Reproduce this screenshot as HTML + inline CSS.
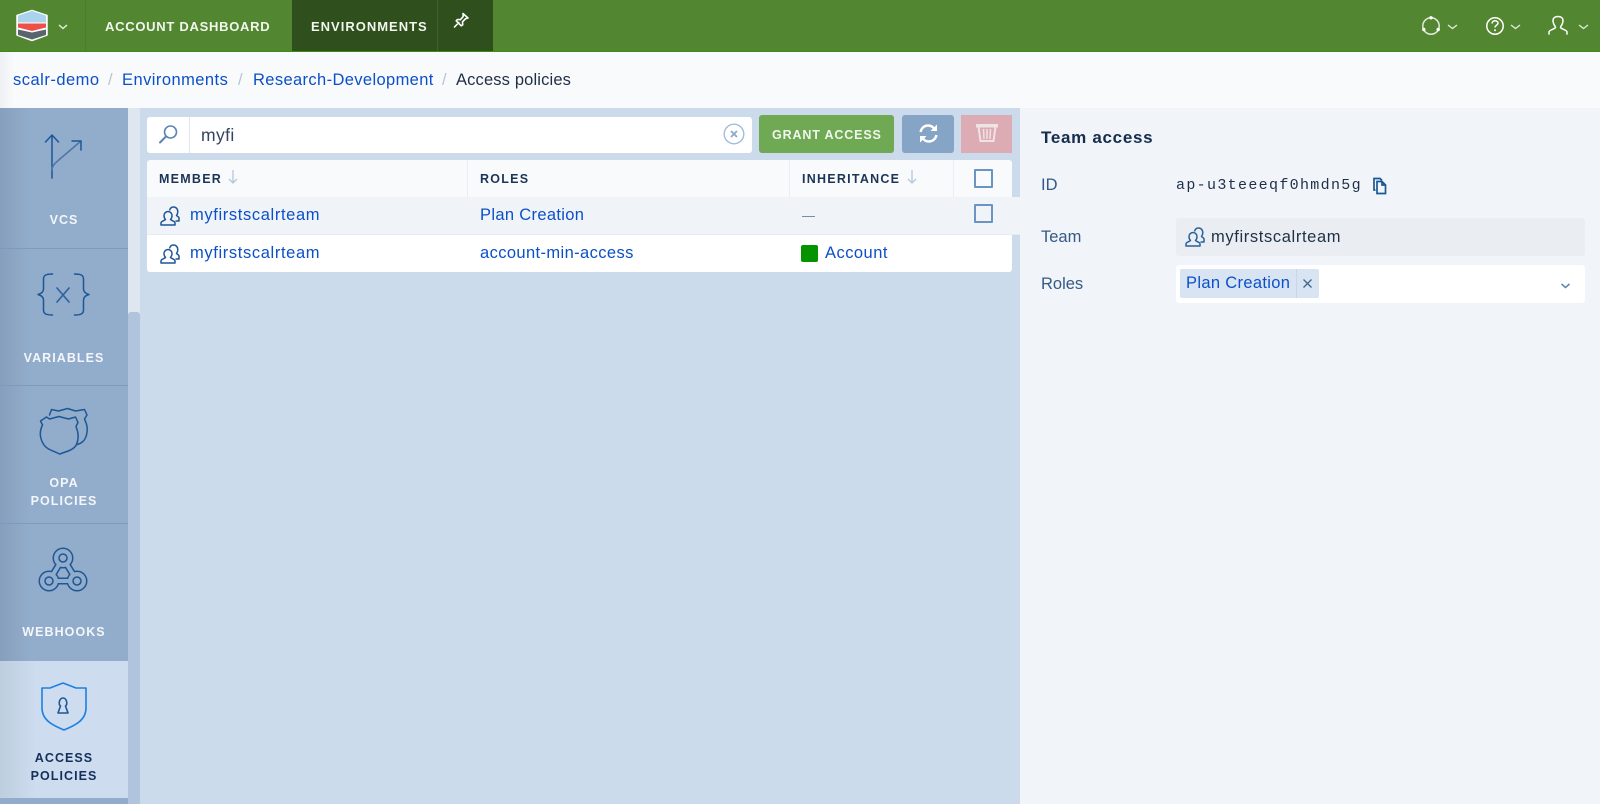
<!DOCTYPE html>
<html lang="en"><head><meta charset="utf-8"><title>Access policies</title>
<style>
*{box-sizing:border-box}
html,body{margin:0;padding:0}
body{width:1600px;height:804px;overflow:hidden;position:relative;background:#cbdbeb;font-family:"Liberation Sans",sans-serif;font-size:16.5px;color:#1d3557}
.a{position:absolute}
.t{position:absolute;white-space:nowrap;line-height:20px}
.l{color:#0b50c8}
.nav{color:#f2f6ee;font-weight:bold;font-size:13px;top:17px}
.side{position:absolute;left:0;width:128px;background:linear-gradient(90deg,#869fbc 0,#92accb 30px,#92accb 100%);border-bottom:1px solid #7f9bbc}
.sl{position:absolute;left:0;width:128px;text-align:center;color:#f3f6fa;font-weight:bold;font-size:12.5px;letter-spacing:1.05px;line-height:18px}
.th{font-weight:bold;font-size:12.5px;letter-spacing:1.25px;color:#1c3556;top:169px}
.cb{position:absolute;width:19px;height:19px;border:2px solid #6a94c2;border-radius:1px}
svg{position:absolute;overflow:visible}
.ic{fill:none;stroke:#1d5796;stroke-width:1.5;stroke-linecap:round;stroke-linejoin:round}
</style></head><body>

<!-- top bar -->
<div class="a" style="left:0;top:0;width:1600px;height:52px;background:#538630;border-bottom:1px solid #3f8a10"></div>
<div class="a" style="left:85px;top:0;width:1px;height:51px;background:#4c7c2b"></div>
<div class="a" style="left:292px;top:0;width:201px;height:51px;background:#2f4f1c"></div>
<div class="a" style="left:437px;top:0;width:1px;height:51px;background:#41622c"></div>
<div class="t nav" style="left:105px;letter-spacing:.72px">ACCOUNT DASHBOARD</div>
<div class="t nav" style="left:311px;letter-spacing:1px">ENVIRONMENTS</div>

<svg style="left:0;top:0" width="80" height="52" viewBox="0 0 80 52">
<path d="M17 15.500L32 10.500L47 15.500V35L32 40.500L17 35Z" fill="#fff" stroke="#fff" stroke-width="1.500" stroke-linejoin="round"/>
<path d="M18 15.500L32 11L46 15.500V22.500H18Z" fill="#abd3ee"/>
<path d="M18 23.500H46V27.500L32 31L18 27.500Z" fill="#ee4f47"/>
<path d="M18 29.500L32 32.500L46 29.500V35L32 39.500L18 35Z" fill="#56666c"/>
<path d="M59 25l4 3.500 4-3.500" fill="none" stroke="#d8e5cf" stroke-width="1.500"/>
</svg>
<svg style="left:452px;top:12px" width="18" height="18" viewBox="0 0 18 18"><path d="M11 1.500l5 4.500-2.500.8-3 3 .2 3-1.500 1-5-5 1.200-1.300 3 .2 2.800-3.200zM6.800 10.500l-4.300 4.500" fill="none" stroke="#fff" stroke-width="1.600" stroke-linejoin="round" stroke-linecap="round"/></svg>

<svg style="left:1420px;top:12px" width="180" height="28" viewBox="0 0 180 28">
<circle cx="11" cy="14" r="8.200" fill="none" stroke="#dfe9d8" stroke-width="1.500"/><circle cx="11" cy="5.800" r="1.700" fill="#fff"/><circle cx="3.800" cy="17.500" r="1.700" fill="#fff"/><circle cx="18.200" cy="17.500" r="1.700" fill="#fff"/>
<path d="M28 13l4.500 3.500 4.500-3.500M91 13l4.500 3.500 4.500-3.500M159 13l4.500 3.500 4.500-3.500" fill="none" stroke="#dfe9d8" stroke-width="1.400"/>
<circle cx="75" cy="14" r="8.200" fill="none" stroke="#fff" stroke-width="1.500"/>
<path d="M72 11.500c.3-2 1.500-2.800 3-2.800 1.800 0 3 1.100 3 2.500 0 2-3 2.100-3 4.300" fill="none" stroke="#fff" stroke-width="1.500"/><circle cx="75" cy="18.300" r="1" fill="#fff"/>
<path d="M129 22v-2c0-2 6-3 6.500-4.500.2-1-2.500-3-2.500-7 0-2.500 2-4 5-4s5 1.500 5 4c0 4-2.700 6-2.500 7 .5 1.500 6.500 2.500 6.500 4.500v2" fill="none" stroke="#fff" stroke-width="1.500" stroke-linecap="round" stroke-linejoin="round"/>
</svg>

<!-- breadcrumb -->
<div class="a" style="left:0;top:52px;width:1600px;height:56px;background:linear-gradient(90deg,#eef0f3 0,#f9fafc 14px)"></div>
<div class="t l" style="left:13px;top:70px;letter-spacing:.5px">scalr-demo</div>
<div class="t" style="left:108px;top:70px;color:#b8c4d2">/</div>
<div class="t l" style="left:122px;top:70px;letter-spacing:.45px">Environments</div>
<div class="t" style="left:238px;top:70px;color:#b8c4d2">/</div>
<div class="t l" style="left:253px;top:70px;letter-spacing:.37px">Research-Development</div>
<div class="t" style="left:442px;top:70px;color:#b8c4d2">/</div>
<div class="t" style="left:456px;top:70px;color:#1f2f45;letter-spacing:.15px">Access policies</div>

<!-- left column -->
<div class="a" style="left:0;top:108px;width:128px;height:696px;background:#92accb"></div>
<div class="a" style="left:128px;top:108px;width:12px;height:696px;background:#dee6f0"></div>
<div class="a" style="left:128px;top:312px;width:12px;height:492px;background:#b0c5dd;border-radius:3px 3px 0 0"></div>
<div class="a" style="left:140px;top:108px;width:880px;height:696px;background:#cbdbeb"></div>

<div class="side" style="top:108px;height:141px"></div>
<div class="side" style="top:249px;height:137px"></div>
<div class="side" style="top:386px;height:138px"></div>
<div class="side" style="top:524px;height:138px"></div>
<div class="a" style="left:0;top:798px;width:128px;height:6px;background:#92accb"></div>
<div class="a" style="left:0;top:661px;width:128px;height:137px;background:linear-gradient(90deg,#bdcedf 0,#cddcee 36px)"></div>

<div class="sl" style="top:211px">VCS</div>
<div class="sl" style="top:349px">VARIABLES</div>
<div class="sl" style="top:474px">OPA<br>POLICIES</div>
<div class="sl" style="top:623px">WEBHOOKS</div>
<div class="sl" style="top:749px;color:#14305a">ACCESS<br>POLICIES</div>

<svg style="left:0;top:108px" width="128" height="696" viewBox="0 0 128 696">
<g class="ic">
<path d="M52 70V27M45.500 34L52 27L58.500 34"/>
<path d="M52 62c0-3 2-6 5-8.500L81 33" stroke="#4d76a6"/>
<path d="M72 33H81V42"/>
<!-- braces -->
<path d="M52.500 166c-6 0-9 1-9 5v10c0 3-2 4.500-5.500 5.500 3.500 1 5.500 2.500 5.500 5.500v10c0 4 3 5 9 5M74.500 166c6 0 9 1 9 5v10c0 3 2 4.500 5.500 5.500-3.500 1-5.500 2.500-5.500 5.500v10c0 4-3 5-9 5"/>
<path d="M57 180l12 14M69 180l-12 14" stroke="#2f64a0" stroke-width="1.700"/>
<!-- shields -->
<path d="M49.500 307l2-5.500 7 1.500 9-2.500 8 2.500 9-1.500 2.500 5.500-2.500 4c2.500 5 3.500 11 2 16-1.500 6-5 8-9 9.500"/>
<path d="M59.500 346c-5-3-12-4-15.500-9-4-6-5-13-1.500-20l-2-4 6-4 3 2 9.500-2.500 9.500 2.500 7-2 2.500 5.500-2 4c2.500 6 3 12 .5 18-3 6-11 7-16.500 9.500z"/>
</g>
<!-- webhook as tube outline -->
<g fill="#1d5796" stroke="#1d5796">
<path d="M63 450L49 473H77Z" fill="none" stroke-width="7" stroke-linejoin="round"/>
<circle cx="63" cy="450" r="10.500" stroke="none"/><circle cx="49" cy="473" r="10.500" stroke="none"/><circle cx="77" cy="473" r="10.500" stroke="none"/>
</g>
<g fill="#92accb" stroke="#92accb">
<path d="M63 450L49 473H77Z" fill="none" stroke-width="4" stroke-linejoin="round"/>
<circle cx="63" cy="450" r="9" stroke="none"/><circle cx="49" cy="473" r="9" stroke="none"/><circle cx="77" cy="473" r="9" stroke="none"/>
</g>
<g fill="none" stroke="#1d5796" stroke-width="1.500">
<circle cx="63" cy="450" r="4"/><circle cx="49" cy="473" r="4"/><circle cx="77" cy="473" r="4"/>
</g>
<g fill="none" stroke="#1f80e0" stroke-width="1.600" stroke-linejoin="round">
<path d="M42 580h8l13-5 13 5h10v20c0 12-10 17-22 22-12-5-22-10-22-22z"/>
<path d="M60.500 598c-2.500-2-1-8 2.500-8s5 6 2.500 8l2.500 7h-10z" stroke="#1d5796"/>
</g>
</svg>

<!-- search -->
<div class="a" style="left:147px;top:117px;width:605px;height:36px;background:#fff;border-radius:3px"></div>
<div class="a" style="left:189px;top:117px;width:1px;height:36px;background:#dfe8f2"></div>
<svg style="left:158px;top:124px" width="22" height="22" viewBox="0 0 22 22"><circle cx="12.500" cy="8" r="6" fill="none" stroke="#5b83b4" stroke-width="1.600"/><path d="M8 12.500l-6 6" stroke="#5b83b4" stroke-width="2" stroke-linecap="round"/></svg>
<div class="t" style="left:201px;top:125px;font-size:17.5px;color:#33445e;letter-spacing:.4px">myfi</div>
<svg style="left:723px;top:123px" width="22" height="22" viewBox="0 0 22 22"><circle cx="11" cy="11" r="9.800" fill="none" stroke="#a3bcd9" stroke-width="1.400"/><path d="M8 8l6 6M14 8l-6 6" stroke="#8ea9c9" stroke-width="1.800"/></svg>

<!-- buttons -->
<div class="a" style="left:759px;top:115px;width:135px;height:38px;background:#6fa954;border-radius:3px"></div>
<div class="t" style="left:772px;top:125px;color:#f1f6ed;font-weight:bold;font-size:12.5px;letter-spacing:.85px">GRANT ACCESS</div>
<div class="a" style="left:902px;top:115px;width:52px;height:38px;background:#86a4c6;border-radius:3px"></div>
<svg style="left:918px;top:123px" width="21" height="21" viewBox="0 0 21 21"><path d="M2.500 9c.8-4 4-6.500 7.500-6.500 2.700 0 4.800 1.200 6 3M18.500 12c-.8 4-4 6.500-7.500 6.500-2.700 0-4.800-1.200-6-3" fill="none" stroke="#fff" stroke-width="2.400"/><path d="M19 1.500v6.500h-6.500zM2 19.500v-6.500h6.500z" fill="#fff"/></svg>
<div class="a" style="left:961px;top:115px;width:51px;height:38px;background:#dcabb3"></div>
<svg style="left:976px;top:122px" width="22" height="22" viewBox="0 0 22 22"><path d="M0 2h22v3.500h-22z" fill="#efe3e6"/><path d="M2.500 5l2 14h13l2-14" fill="none" stroke="#efe3e6" stroke-width="2"/><path d="M7.500 7l.5 10M11 7v10M14.500 7l-.5 10" stroke="#efe3e6" stroke-width="1.500"/></svg>

<!-- table -->
<div class="a" style="left:147px;top:160px;width:865px;height:37px;background:#f8fafc;border-radius:3px 3px 0 0"></div>
<div class="a" style="left:467px;top:160px;width:1px;height:37px;background:#e8eef5"></div>
<div class="a" style="left:789px;top:160px;width:1px;height:37px;background:#e8eef5"></div>
<div class="a" style="left:953px;top:160px;width:1px;height:37px;background:#e8eef5"></div>
<div class="a" style="left:147px;top:197px;width:873px;height:38px;background:#f0f4f9;border-bottom:1px solid #e3ebf3"></div>
<div class="a" style="left:147px;top:235px;width:865px;height:37px;background:#fff;border-radius:0 0 3px 3px"></div>

<div class="t th" style="left:159px">MEMBER</div>
<div class="t th" style="left:480px">ROLES</div>
<div class="t th" style="left:802px">INHERITANCE</div>
<svg style="left:227px;top:169px" width="12" height="16" viewBox="0 0 12 16"><path d="M6 1v13M2 10l4 4 4-4" fill="none" stroke="#b3c6dc" stroke-width="1.300"/></svg>
<svg style="left:906px;top:169px" width="12" height="16" viewBox="0 0 12 16"><path d="M6 1v13M2 10l4 4 4-4" fill="none" stroke="#b3c6dc" stroke-width="1.300"/></svg>
<div class="cb" style="left:974px;top:169px"></div>
<div class="cb" style="left:974px;top:204px"></div>

<svg style="left:160px;top:206px" width="20" height="20" viewBox="0 0 20 20"><g fill="none" stroke="#1d5796" stroke-width="1.500" stroke-linejoin="round"><path d="M9.500 4.500c.5-2 2-3.500 4-3.500 2.500 0 4.300 2 4.300 4.500 0 1.500-.5 3-1.300 4 1 1 2.500 1.200 2.500 2.500v3h-3.500"/><path d="M1 19v-2c0-1.800 3-2 4.500-3.500-1-1-1.500-2.500-1.500-4 0-2.200 1.800-4 4-4s4 1.800 4 4c0 1.500-.5 3-1.500 4 1.500 1.500 4.500 1.700 4.500 3.500v2z"/></g></svg>
<svg style="left:160px;top:244px" width="20" height="20" viewBox="0 0 20 20"><g fill="none" stroke="#1d5796" stroke-width="1.500" stroke-linejoin="round"><path d="M9.500 4.500c.5-2 2-3.500 4-3.500 2.500 0 4.300 2 4.300 4.500 0 1.500-.5 3-1.300 4 1 1 2.500 1.200 2.500 2.500v3h-3.500"/><path d="M1 19v-2c0-1.800 3-2 4.500-3.500-1-1-1.500-2.500-1.500-4 0-2.200 1.800-4 4-4s4 1.800 4 4c0 1.500-.5 3-1.500 4 1.500 1.500 4.500 1.700 4.500 3.500v2z"/></g></svg>
<div class="t l" style="left:190px;top:205px;letter-spacing:.63px">myfirstscalrteam</div>
<div class="t l" style="left:190px;top:243px;letter-spacing:.63px">myfirstscalrteam</div>
<div class="t l" style="left:480px;top:205px;letter-spacing:.33px">Plan Creation</div>
<div class="t l" style="left:480px;top:243px;letter-spacing:.39px">account-min-access</div>
<div class="a" style="left:802px;top:216px;width:13px;height:1px;background:#7a8da5"></div>
<div class="a" style="left:801px;top:245px;width:17px;height:17px;background:#059300;border-radius:2px"></div>
<div class="t l" style="left:825px;top:243px;letter-spacing:.47px">Account</div>

<!-- right panel -->
<div class="a" style="left:1020px;top:108px;width:580px;height:696px;background:#f1f4f9"></div>
<div class="t" style="left:1041px;top:128px;font-weight:bold;font-size:17px;color:#152e4d;letter-spacing:.7px">Team access</div>
<div class="t" style="left:1041px;top:175px;color:#345a85">ID</div>
<div class="t" style="left:1041px;top:227px;color:#345a85">Team</div>
<div class="t" style="left:1041px;top:274px;color:#345a85">Roles</div>
<div class="t" style="left:1176px;top:176px;font-family:'Liberation Mono',monospace;font-size:15px;letter-spacing:1.33px;color:#1f3048">ap-u3teeeqf0hmdn5g</div>
<svg style="left:1372px;top:177px" width="16" height="18" viewBox="0 0 16 18"><path d="M3.500 13h-1.500v-11.500h6l2 2" fill="none" stroke="#1d5796" stroke-width="1.700"/><path d="M5 4.500h5l3.500 3.500v8.500h-8.500zM10 4.500v3.500h3.500" fill="none" stroke="#1d5796" stroke-width="1.700"/></svg>
<div class="a" style="left:1176px;top:218px;width:409px;height:38px;background:#eaeef2;border-radius:3px"></div>
<svg style="left:1185px;top:227px" width="20" height="20" viewBox="0 0 20 20"><g fill="none" stroke="#2b6099" stroke-width="1.500" stroke-linejoin="round"><path d="M9.500 4.500c.5-2 2-3.500 4-3.500 2.500 0 4.300 2 4.300 4.500 0 1.500-.5 3-1.300 4 1 1 2.500 1.200 2.500 2.500v3h-3.500"/><path d="M1 19v-2c0-1.800 3-2 4.500-3.500-1-1-1.500-2.500-1.500-4 0-2.200 1.800-4 4-4s4 1.800 4 4c0 1.500-.5 3-1.500 4 1.500 1.500 4.500 1.700 4.500 3.500v2z"/></g></svg>
<div class="t" style="left:1211px;top:227px;color:#1f3048;letter-spacing:.63px">myfirstscalrteam</div>
<div class="a" style="left:1176px;top:265px;width:409px;height:38px;background:#fff;border-radius:3px"></div>
<div class="a" style="left:1180px;top:269px;width:139px;height:29px;background:#d9e4f3;border-radius:2px"></div>
<div class="a" style="left:1296px;top:269px;width:1px;height:29px;background:#c8d6e8"></div>
<div class="t l" style="left:1186px;top:273px;letter-spacing:.33px">Plan Creation</div>
<svg style="left:1302px;top:278px" width="11" height="11" viewBox="0 0 11 11"><path d="M1.500 1.500l8 8M9.500 1.500l-8 8" stroke="#3f6491" stroke-width="1.300"/></svg>
<svg style="left:1499px;top:280px" width="70" height="12" viewBox="0 0 70 12"><path d="M62.500 4l4 3.500 4-3.500" fill="none" stroke="#5e83ad" stroke-width="1.500"/></svg>

</body></html>
